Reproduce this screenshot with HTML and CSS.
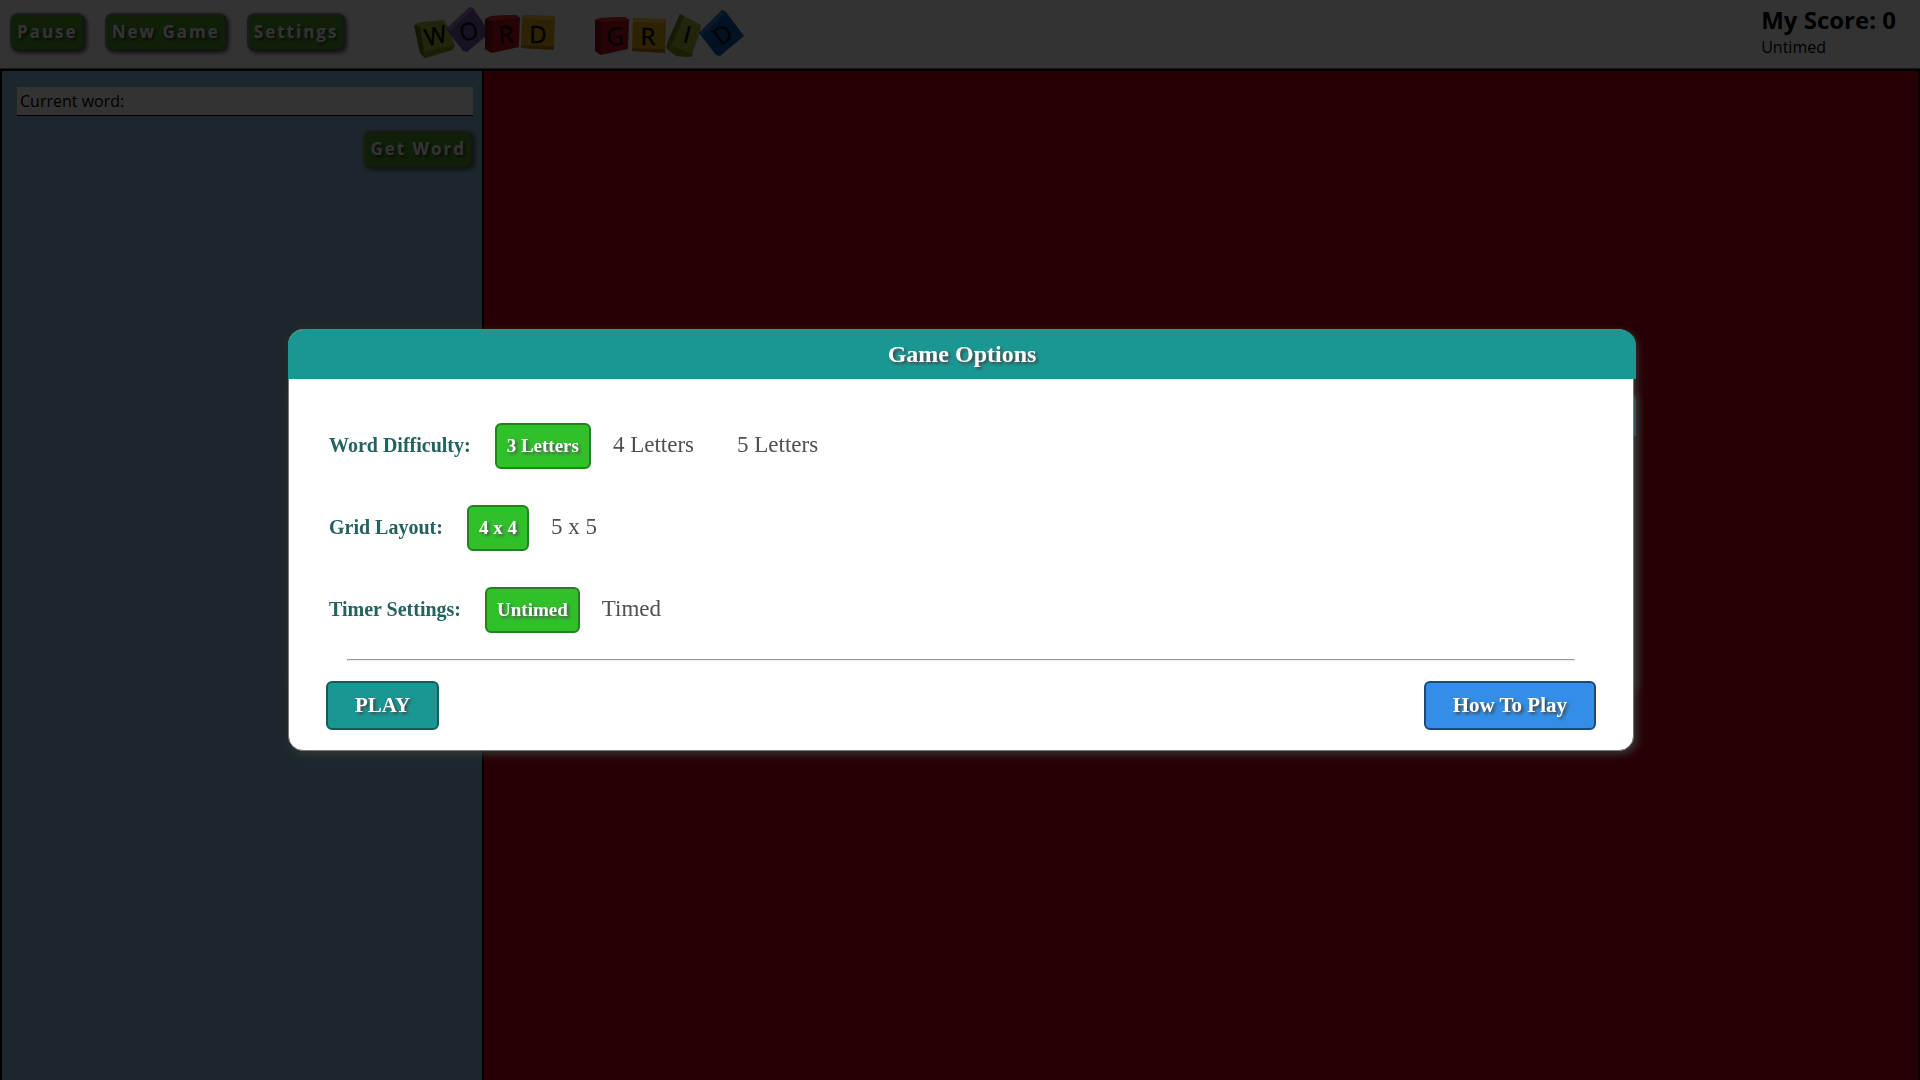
FILE: index.html
```html
<!DOCTYPE html>
<html lang="en">
<head>
    <meta charset="UTF-8">
    <meta name="viewport" content="width=device-width, initial-scale=1.0">
    <title>Word Grid</title>
    <link rel="stylesheet" href="styles.css">
</head>
<body>
    <header class="top-bar">
        <div class="menu">
            <button class="btn" type="button">Pause</button>
            <button class="btn" type="button">New Game</button>
            <button class="btn" type="button">Settings</button>
        </div>
        <svg class="logo" viewBox="0 0 340 60" role="img" aria-label="Word Grid">
            <!-- W -->
            <path d="M2 25 L9 22 L32 20 L38 30 L43 46 L40 50 L13 58 L8 53 Z" fill="#a4b83a"/>
            <path d="M2 25 L8 27 L13 58 L8 53 Z" fill="#5f7a16"/>
            <path d="M12 52 L43 45 L40 50 L13 58 Z" fill="#7f9a1c"/>
            <text x="24" y="44" transform="rotate(-12 24 37)">W</text>
            <!-- O -->
            <path d="M34 29 L58 7 L61 8 L74 27 L73 37 L55 52 L51 51 Z" fill="#7656a8"/>
            <path d="M34 29 L58 7 L61 9 L38 31 Z" fill="#9678c4"/>
            <text x="57" y="40" transform="rotate(-14 57 32)">O</text>
            <!-- R -->
            <path d="M73 19 L79 16 L104 15 L108 18 L107 47 L80 53 L73 49 Z" fill="#c41220"/>
            <path d="M73 19 L81 21 L80 53 L73 49 Z" fill="#8c0c18"/>
            <path d="M73 19 L79 16 L104 15 L108 18 L81 21 Z" fill="#d82834"/>
            <text x="94" y="43" transform="rotate(-3 94 36)">R</text>
            <!-- D -->
            <path d="M110 15 L143 16 L142 50 L109 48 Z" fill="#e0a818"/>
            <path d="M110 15 L143 16 L140 20 L110 19 Z" fill="#f4c840"/>
            <path d="M109 45 L142 46 L142 50 L109 48 Z" fill="#b88408"/>
            <text x="126" y="43">D</text>
            <!-- G -->
            <path d="M183 20 L188 18 L213 17 L217 20 L216 49 L189 55 L183 51 Z" fill="#c41220"/>
            <path d="M183 20 L190 22 L189 55 L183 51 Z" fill="#8c0c18"/>
            <path d="M183 20 L188 18 L213 17 L217 20 L190 22 Z" fill="#d82834"/>
            <text x="203" y="45" transform="rotate(-3 203 37)">G</text>
            <!-- R -->
            <path d="M221 18 L254 19 L253 53 L220 51 Z" fill="#e0a818"/>
            <path d="M221 18 L254 19 L251 23 L221 22 Z" fill="#f4c840"/>
            <path d="M220 48 L253 49 L253 53 L220 51 Z" fill="#b88408"/>
            <text x="236" y="45">R</text>
            <!-- I -->
            <path d="M268 14 L289 25 L288 32 L279 57 L264 56 L254 48 L256 41 Z" fill="#a4b83a"/>
            <path d="M268 14 L272 16 L259 47 L254 48 L256 41 Z" fill="#6f8a18"/>
            <path d="M254 48 L259 46 L281 54 L279 57 L264 56 Z" fill="#7f9a1c"/>
            <text x="275" y="43" transform="rotate(14 275 36)">I</text>
            <!-- D -->
            <path d="M287 33 L310 10 L314 12 L332 36 L308 56 L304 55 Z" fill="#0a5ca8"/>
            <path d="M287 33 L310 10 L313 13 L290 36 Z" fill="#2f80c8"/>
            <text x="311" y="43" transform="rotate(-36 311 35)">D</text>
        </svg>
        <div class="score">
            <h2>My Score: 0</h2>
            <p>Untimed</p>
        </div>
    </header>

    <main class="game">
        <aside class="word-panel">
            <input class="current-word" type="text" value="Current word:" aria-label="Current word" readonly>
            <button class="btn" type="button">Get Word</button>
        </aside>
        <section class="board"></section>
    </main>

    <div class="overlay">
        <div class="modal modal-back" aria-hidden="true">
            <div class="modal-header"></div>
        </div>

        <form class="modal" role="dialog" aria-labelledby="options-title">
            <h2 class="modal-header" id="options-title">Game Options</h2>
            <div class="modal-body">
                <fieldset class="option">
                    <legend>Word Difficulty:</legend>
                    <input type="radio" name="difficulty" id="letters3" checked>
                    <label for="letters3">3 Letters</label>
                    <input type="radio" name="difficulty" id="letters4">
                    <label for="letters4">4 Letters</label>
                    <input type="radio" name="difficulty" id="letters5">
                    <label for="letters5">5 Letters</label>
                </fieldset>
                <fieldset class="option">
                    <legend>Grid Layout:</legend>
                    <input type="radio" name="grid" id="grid4" checked>
                    <label for="grid4">4 x 4</label>
                    <input type="radio" name="grid" id="grid5">
                    <label for="grid5">5 x 5</label>
                </fieldset>
                <fieldset class="option">
                    <legend>Timer Settings:</legend>
                    <input type="radio" name="timer" id="untimed" checked>
                    <label for="untimed">Untimed</label>
                    <input type="radio" name="timer" id="timed">
                    <label for="timed">Timed</label>
                </fieldset>
                <hr>
            </div>
            <div class="modal-footer">
                <button class="modal-btn play" type="button">PLAY</button>
                <button class="modal-btn help" type="button">How To Play</button>
            </div>
        </form>
    </div>
</body>
</html>
```
FILE: styles.css
```css
* { box-sizing: border-box; }

body {
    margin: 0;
    height: 100vh;
    overflow: hidden;
    display: flex;
    flex-direction: column;
    font-family: "Open Sans", "Noto Sans", sans-serif;
    font-size: 16px;
    background: #fff;
}

/* top bar */
.top-bar {
    display: flex;
    align-items: flex-start;
    min-height: 69px;
    padding: 0 24px 0 10px;
    border-bottom: 1px solid #777;
}
.menu { display: flex; gap: 20px; padding-top: 13px; }
.logo { width: 340px; height: 60px; margin-left: 67px; }
.logo text {
    font-size: 24px;
    text-anchor: middle;
    fill: #111;
    stroke: #111;
    stroke-width: 0.5;
}
.score { margin-left: auto; padding-top: 4px; }
.score h2 { margin: 0; font-size: 24px; line-height: 32px; }
.score p { margin: 0; line-height: 22px; }

.btn {
    height: 38px;
    padding: 0 5px 2px;
    border: 2px solid #777;
    border-color: #888 #666 #666 #888;
    border-radius: 8px;
    background: #4c9a2a;
    color: #fff;
    font-family: inherit;
    font-size: 17px;
    font-weight: bold;
    letter-spacing: 2px;
    text-shadow: 2px 2px 3px #333;
    box-shadow: 2px 2px 4px #555;
    cursor: pointer;
}

/* game area */
.game {
    flex: 1;
    display: flex;
    border: 2px solid #000;
    border-bottom: 0;
}
.word-panel {
    flex: 0 0 calc(25vw + 2px);
    display: flex;
    flex-direction: column;
    align-items: flex-end;
    gap: 14px;
    padding: 16px 9px 0 15px;
    border-right: 2px solid #000;
    background: #87c3dc;
}
.current-word {
    width: 100%;
    height: 29px;
    padding: 0 3px;
    border: 0;
    border-bottom: 1px solid #000;
    background: #fff;
    font-family: inherit;
    font-size: 16px;
}
.board { flex: 1; background: #be0014; }

/* dialogs */
.overlay {
    position: fixed;
    inset: 0;
    display: grid;
    align-items: center;
    background: rgba(0, 0, 0, 0.8);
    font-family: "Liberation Serif", serif;
}
.modal {
    grid-area: 1 / 1;
    width: calc(70% + 2px);
    margin: 0 0 0 15%;
    border: 1px solid #777;
    border-radius: 15px;
    background: #fff;
    box-shadow: 3px 3px 8px #383838;
}
.modal-back { height: 308px; }
.modal-header {
    width: calc(100% + 4px);
    height: 49px;
    margin: 0 -1px;
    border-radius: 15px 15px 0 0;
    background: #1a9792;
    color: #fff;
    font-size: 24px;
    line-height: 49px;
    text-align: center;
    text-shadow: 2px 2px 3px #444;
}
.modal-body { padding: 26px 40px 0; }
.option {
    display: flex;
    align-items: center;
    height: 82px;
    min-width: 0;
    margin: 0;
    padding: 0;
    border: 0;
}
.option legend {
    float: left;
    margin-right: 24px;
    padding: 0 0 2px;
    color: #22625f;
    font-size: 20px;
    font-weight: bold;
}
.option input { position: absolute; opacity: 0; }
.option label {
    padding: 0 21px 2px 22px;
    color: #505050;
    font-size: 23px;
    cursor: pointer;
}
.option input:checked + label {
    padding: 0 10px;
    border: 2px solid #22821c;
    border-radius: 6px;
    background: #2fc02a;
    color: #fff;
    font-size: 19px;
    font-weight: bold;
    line-height: 42px;
    text-shadow: 2px 2px 3px #555;
}
.modal-body hr { margin: 8px 18px 0; }
.modal-footer {
    display: flex;
    justify-content: space-between;
    padding: 20px 37px;
}
.modal-btn {
    height: 49px;
    padding: 0 27px;
    border: 2px solid #0e5f5b;
    border-radius: 6px;
    color: #fff;
    font-family: inherit;
    font-size: 21px;
    font-weight: bold;
    text-shadow: 2px 2px 3px #444;
    cursor: pointer;
}
.play { background: #1a9792; }
.help { background: #348de6; border-color: #1a4a7c; }
```
